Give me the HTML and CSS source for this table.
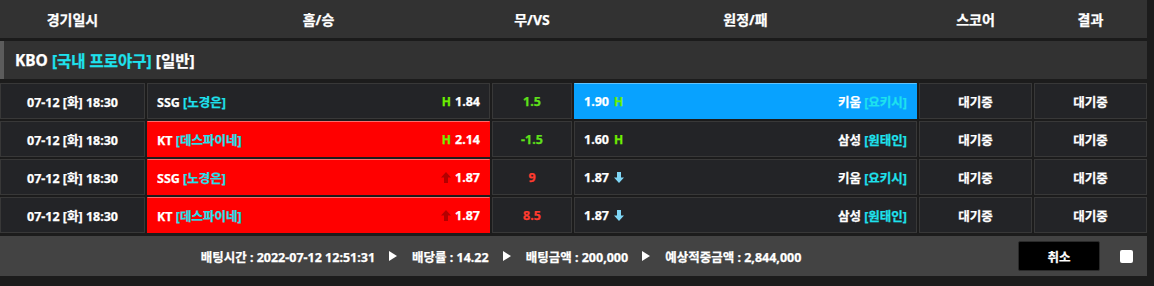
FILE: index.html
```html
<!DOCTYPE html>
<html lang="ko">
<head>
<meta charset="utf-8">
<link rel="stylesheet" href="styles.css">
</head>
<body>
<div class="board">
  <div class="head grid">
    <div>경기일시</div>
    <div>홈/승</div>
    <div>무/VS</div>
    <div>원정/패</div>
    <div>스코어</div>
    <div>결과</div>
  </div>
  <div class="league">KBO <span class="cy">[국내 프로야구]</span> [일반]</div>
  <div class="rows">
    <div class="grid row">
      <div class="cell c">07-12 [화] 18:30</div>
      <div class="cell team"><span>SSG <span class="cy">[노경은]</span></span><span class="odd"><span class="h">H</span>1.84</span></div>
      <div class="cell c green">1.5</div>
      <div class="cell team blue"><span class="odd">1.90<span class="h r">H</span></span><span>키움 <span class="cy">[요키시]</span></span></div>
      <div class="cell c">대기중</div>
      <div class="cell c">대기중</div>
    </div>
    <div class="grid row">
      <div class="cell c">07-12 [화] 18:30</div>
      <div class="cell team red"><span>KT <span class="cy">[데스파이네]</span></span><span class="odd"><span class="h">H</span>2.14</span></div>
      <div class="cell c green">-1.5</div>
      <div class="cell team"><span class="odd">1.60<span class="h r">H</span></span><span>삼성 <span class="cy">[원태인]</span></span></div>
      <div class="cell c">대기중</div>
      <div class="cell c">대기중</div>
    </div>
    <div class="grid row">
      <div class="cell c">07-12 [화] 18:30</div>
      <div class="cell team red"><span>SSG <span class="cy">[노경은]</span></span><span class="odd"><svg class="up" width="10" height="11" viewBox="0 0 10 11"><path d="M5 0 L10 5.5 H7 V11 H3 V5.5 H0 Z" fill="#b30000"/></svg>1.87</span></div>
      <div class="cell c redtxt">9</div>
      <div class="cell team"><span class="odd">1.87<svg class="down" width="10" height="11" viewBox="0 0 10 11"><path d="M5 11 L10 5.5 H7 V0 H3 V5.5 H0 Z" fill="#7fd6f5"/></svg></span><span>키움 <span class="cy">[요키시]</span></span></div>
      <div class="cell c">대기중</div>
      <div class="cell c">대기중</div>
    </div>
    <div class="grid row">
      <div class="cell c">07-12 [화] 18:30</div>
      <div class="cell team red"><span>KT <span class="cy">[데스파이네]</span></span><span class="odd"><svg class="up" width="10" height="11" viewBox="0 0 10 11"><path d="M5 0 L10 5.5 H7 V11 H3 V5.5 H0 Z" fill="#b30000"/></svg>1.87</span></div>
      <div class="cell c redtxt">8.5</div>
      <div class="cell team"><span class="odd">1.87<svg class="down" width="10" height="11" viewBox="0 0 10 11"><path d="M5 11 L10 5.5 H7 V0 H3 V5.5 H0 Z" fill="#7fd6f5"/></svg></span><span>삼성 <span class="cy">[원태인]</span></span></div>
      <div class="cell c">대기중</div>
      <div class="cell c">대기중</div>
    </div>
  </div>
  <div class="foot">
    <div class="info">
      <span>배팅시간 : 2022-07-12 12:51:31</span><span class="tri"></span>
      <span>배당률 : 14.22</span><span class="tri"></span>
      <span>배팅금액 : 200,000</span><span class="tri"></span>
      <span>예상적중금액 : 2,844,000</span>
    </div>
    <button class="cancel">취소</button>
    <span class="check"></span>
  </div>
</div>
</body>
</html>
```
FILE: styles.css
```css
html, body {
  margin: 0;
  padding: 0;
  background: #1c1c1c;
  height: 286px;
  overflow: hidden;
}
body {
  font-family: "Noto Sans", "Noto Sans CJK KR", sans-serif;
  font-weight: 700;
  color: #fff;
  -webkit-text-stroke: 0.25px currentColor;
}
.board {
  width: 1147px;
}
.grid {
  display: grid;
  grid-template-columns: 145px 343px 80px 343px 113px 113px;
  column-gap: 2px;
}
.head {
  height: 38px;
  background: #323232;
  font-size: 14px;
  align-items: center;
  text-align: center;
  border-bottom: 3px solid #1b1b1b;
}
.league {
  height: 38px;
  background: #323232;
  border-left: 4px solid #5c5c5c;
  padding-left: 11px;
  display: flex;
  align-items: center;
  font-size: 15.5px;
  white-space: pre;
}
.cy { color: #1ee2ee; }
.rows {
  margin-top: 4px;
  display: flex;
  flex-direction: column;
  gap: 2px;
}
.row { height: 36px; }
.cell {
  box-sizing: border-box;
  background: #232427;
  border: 1px solid #383838;
  font-size: 12.5px;
  display: flex;
  align-items: center;
}
.c { justify-content: center; }
.team {
  justify-content: space-between;
  padding: 0 9px;
  white-space: pre;
}
.red {
  background: #ff0000;
  border-color: #ff0000;
  border-top-color: #ff6a6a;
}
.blue {
  background: #08a2ff;
  border-color: #08a2ff;
  border-top-color: #60c4ff;
}
.odd {
  display: flex;
  align-items: center;
}
.h {
  color: #6ef000;
  font-size: 12px;
  margin-right: 4px;
}
.h.r { margin: 0 0 0 5px; }
.up { margin-right: 4px; }
.down { margin-left: 5px; }
.green { color: #5fe01a; }
.redtxt { color: #ff3b2f; }
.foot {
  margin-top: 3px;
  height: 40px;
  background: #434343;
  display: flex;
  align-items: center;
  font-size: 12.5px;
}
.info {
  flex: 1;
  display: flex;
  justify-content: center;
  align-items: center;
  white-space: pre;
}
.tri {
  width: 0;
  height: 0;
  border-left: 8px solid #fff;
  border-top: 5px solid transparent;
  border-bottom: 5px solid transparent;
  margin: 0 15px 0 14px;
}
.cancel {
  width: 82px;
  height: 30px;
  background: #000;
  border: 1px solid #2a2a2a;
  border-radius: 2px;
  color: #fff;
  font-family: inherit;
  font-weight: 700;
  font-size: 12.5px;
  padding: 0;
  margin-left: 16px;
  -webkit-text-stroke: 0.25px currentColor;
}
.check {
  width: 13px;
  height: 13px;
  background: #fff;
  border-radius: 2px;
  margin: 0 14px 0 20px;
}
```
